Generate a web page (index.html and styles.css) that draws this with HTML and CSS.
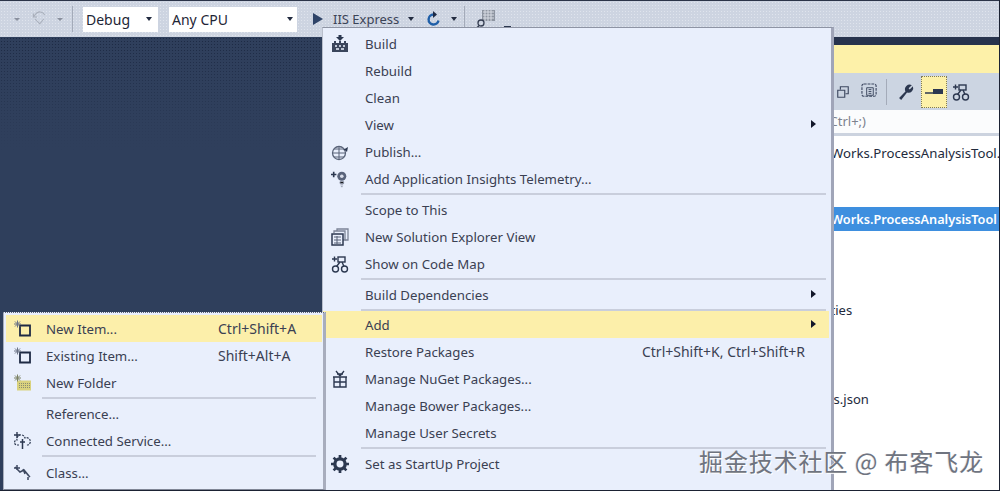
FILE: index.html
```html
<!DOCTYPE html>
<html lang="en">
<head>
<meta charset="utf-8">
<title>Add menu</title>
<link rel="stylesheet" href="styles.css">
</head>
<body>
<div class="app">
  <header class="toolbar">
    <span class="caret faint first"></span>
    <svg class="ic redo" viewBox="0 0 20 20"><path d="M17 5a6.500 6.500 0 0 0-11-1.500L3 7M3 3v4.500h4.500M5 10l6 6 5-6" fill="none" stroke="#a8aeba" stroke-width="1.300"/></svg>
    <span class="caret faint second"></span>
    <span class="tb-sep"></span>
    <div class="combo debug"><span>Debug</span><i class="caret"></i></div>
    <div class="combo cpu"><span>Any CPU</span><i class="caret"></i></div>
    <svg class="ic play" viewBox="0 0 10 12"><path d="M0 0l10 6-10 6z" fill="#2f4468"/></svg>
    <span class="iis">IIS Express</span>
    <i class="caret iis-caret"></i>
    <svg class="ic refresh" viewBox="0 0 16 16"><path d="M8.500 3.500a5 5 0 1 0 5 6" fill="none" stroke="#1f5fa8" stroke-width="2.400"/><path d="M8 0v7l4-3.500z" fill="#1e2a44"/></svg>
    <i class="caret refresh-caret"></i>
    <span class="tb-sep sep2"></span>
    <svg class="ic find" viewBox="0 0 20 20"><rect x="6" y="1" width="13" height="11" fill="#8d94a0"/><path d="M7 3h11M7 6h11M7 9h11M9 1v11M12 1v11M15 1v11" stroke="#d8dce4"/><circle cx="5" cy="14" r="3" fill="none" stroke="#333c50" stroke-width="1.300"/><path d="M3 16.500L1 19" stroke="#333c50" stroke-width="1.500"/></svg>
    <span class="dash"></span>
  </header>

  <div class="workspace">
    <main class="editor"></main>
    <aside class="panel">
      <div class="panel-dark"></div>
      <div class="panel-title"></div>
      <div class="panel-tools">
        <svg class="ic tool-a" viewBox="0 0 16 16"><path d="M5 5V2h9v8h-3M2 6h8v8H2z" fill="none" stroke="#3d4860" stroke-width="1.300"/></svg>
        <svg class="ic tool-b" viewBox="0 0 18 18"><rect x="1" y="1" width="15" height="13" rx="2" fill="none" stroke="#3d4860" stroke-width="1.200" stroke-dasharray="3 1"/><path d="M6 5h7v8H6z" fill="none" stroke="#3d4860"/><path d="M8 7h3M8 9h3M8 11h3" stroke="#3d4860"/></svg>
        <span class="tool-sep"></span>
        <svg class="ic tool-c" viewBox="0 0 16 16"><path d="M1 14l6-6a4.500 4.500 0 0 1 6-6l-3 3 1 1 3-3a4.500 4.500 0 0 1-5.500 6L3 16z" fill="#2c3850"/></svg>
        <span class="tool-on"><svg class="ic tool-d" viewBox="0 0 18 8"><path d="M0 5h9" stroke="#2c3850" stroke-width="1.500"/><rect x="8" y="1" width="10" height="5" fill="#2c3850"/></svg></span>
        <svg class="ic tool-e" viewBox="0 0 18 18"><use href="#codemap"/></svg>
      </div>
      <div class="search">Search (Ctrl+;)</div>
      <div class="tree">
        <div class="row r1"><span>Works.ProcessAnalysisTool.</span></div>
        <div class="row selected"><span>Works.ProcessAnalysisTool</span></div>
        <div class="row r3"><span>Properties</span></div>
        <div class="row r4"><span>appsettings.json</span></div>
      </div>
    </aside>
  </div>

  <svg class="defs" width="0" height="0" aria-hidden="true"><defs>
    <g id="codemap" fill="none" stroke="#2c3850" stroke-width="1.400"><circle cx="4.500" cy="14" r="3"/><circle cx="13.500" cy="14" r="3"/><rect x="7" y="2" width="7" height="5"/><path d="M9 7l-3.500 4.500M11 7l2 4.500"/><path d="M1 4h5M3.500 1.500v5"/></g>
    <g id="newitem"><path d="M6 5h10v10H6z" fill="none" stroke="#1e2a44" stroke-width="1.800"/><path d="M3.500 0v7M0 3.500h7M1 1l5 5M6 1L1 6" stroke="#6c7486" stroke-width="1"/></g>
  </defs></svg>

  <nav class="menu main-menu">
    <div class="item"><span class="gut"><svg class="ic" viewBox="0 0 18 18"><path d="M1 8h16v9H1z" fill="#3a455c"/><path d="M4 8V6M9 8V6M14 8V6" stroke="#3a455c" stroke-width="2"/><path d="M4 11h2M8 11h2M12 11h2" stroke="#e9effc" stroke-width="1.500"/><path d="M5 14h3M10 14h3" stroke="#e9effc" stroke-width="1.500"/><path d="M9 6L5 2h2.500V0h3v2H13z" fill="#2c3850"/></svg></span><span class="label">Build</span></div>
    <div class="item"><span class="gut"></span><span class="label">Rebuild</span></div>
    <div class="item"><span class="gut"></span><span class="label">Clean</span></div>
    <div class="item"><span class="gut"></span><span class="label">View</span><span class="sub"></span></div>
    <div class="item"><span class="gut"><svg class="ic" viewBox="0 0 18 18"><circle cx="8" cy="10" r="6.500" fill="none" stroke="#596378" stroke-width="1.300"/><path d="M1.500 10h13M8 3.500v13M3 6h10M3 14h10" stroke="#596378"/><path d="M12 7l5-3-1 5-1.500-1.500z" fill="#2c3850"/></svg></span><span class="label">Publish...</span></div>
    <div class="item"><span class="gut"><svg class="ic" viewBox="0 0 20 20"><circle cx="12" cy="7" r="5" fill="#59637a"/><circle cx="12" cy="7" r="2" fill="#d8dce8"/><path d="M10 13h4v2h-4zM10.500 16.500h3M11 18.500h2" stroke="#8b92a4"/><path d="M0 5h6M3 2v6" stroke="#2c3850" stroke-width="1.800"/></svg></span><span class="label">Add Application Insights Telemetry...</span></div>
    <div class="sep"></div>
    <div class="item"><span class="gut"></span><span class="label">Scope to This</span></div>
    <div class="item"><span class="gut"><svg class="ic" viewBox="0 0 18 18"><path d="M6 3V1h11v11h-3" fill="none" stroke="#7c8496" stroke-width="1.300"/><path d="M3 5V3h11v9h-2" fill="none" stroke="#7c8496" stroke-width="1.300"/><rect x="1" y="6" width="11" height="11" fill="none" stroke="#2c3850" stroke-width="1.500"/><path d="M3 9h7M3 12h7M3 15h7M6 8v8" stroke="#596378"/></svg></span><span class="label">New Solution Explorer View</span></div>
    <div class="item"><span class="gut"><svg class="ic" viewBox="0 0 18 18"><use href="#codemap"/></svg></span><span class="label">Show on Code Map</span></div>
    <div class="sep"></div>
    <div class="item"><span class="gut"></span><span class="label">Build Dependencies</span><span class="sub"></span></div>
    <div class="sep tight"></div>
    <div class="item hot"><span class="gut"></span><span class="label">Add</span><span class="sub"></span></div>
    <div class="item"><span class="gut"></span><span class="label">Restore Packages</span><span class="keys">Ctrl+Shift+K, Ctrl+Shift+R</span><span class="sub none"></span></div>
    <div class="item"><span class="gut"><svg class="ic" viewBox="0 0 16 18"><path d="M2 7h12v10H2zM1 7h14M2 12h12M8 7v10" fill="none" stroke="#2c3850" stroke-width="1.400"/><path d="M8 6L4 1M8 6l4-5M5 4h6" fill="none" stroke="#2c3850" stroke-width="1.300"/></svg></span><span class="label">Manage NuGet Packages...</span></div>
    <div class="item"><span class="gut"></span><span class="label">Manage Bower Packages...</span></div>
    <div class="item"><span class="gut"></span><span class="label">Manage User Secrets</span></div>
    <div class="sep"></div>
    <div class="item"><span class="gut"><svg class="ic" viewBox="0 0 16 16"><circle cx="8" cy="8" r="4.600" fill="none" stroke="#2c3850" stroke-width="3"/><path d="M8 0v3M8 13v3M0 8h3M13 8h3M2.300 2.300l2 2M11.700 11.700l2 2M13.700 2.300l-2 2M4.300 11.700l-2 2" stroke="#2c3850" stroke-width="2.400"/></svg></span><span class="label">Set as StartUp Project</span></div>
  </nav>

  <nav class="menu add-menu">
    <div class="item hot"><span class="gut"><svg class="ic" viewBox="0 0 17 16"><use href="#newitem"/></svg></span><span class="label">New Item...</span><span class="keys">Ctrl+Shift+A</span></div>
    <div class="item"><span class="gut"><svg class="ic" viewBox="0 0 17 16"><use href="#newitem"/></svg></span><span class="label">Existing Item...</span><span class="keys">Shift+Alt+A</span></div>
    <div class="item"><span class="gut"><svg class="ic" viewBox="0 0 17 16"><path d="M3 6h14v10H3z" fill="#d9d27e"/><path d="M5 9h11M5 11h11M5 13h11" stroke="#8a8d72" stroke-dasharray="1 1"/><path d="M3.500 0v7M0 3.500h7M1 1l5 5M6 1L1 6" stroke="#7c8264"/></svg></span><span class="label">New Folder</span></div>
    <div class="sep"></div>
    <div class="item"><span class="gut"></span><span class="label">Reference...</span></div>
    <div class="item"><span class="gut"><svg class="ic" viewBox="0 0 17 17"><path d="M5 13H3a2.500 2.500 0 0 1 0-5 4 4 0 0 1 8-2 3.500 3.500 0 0 1 3 7h-2" fill="none" stroke="#2c3850" stroke-width="1.200" stroke-dasharray="2 1"/><path d="M8.500 7v10M6 10h5" stroke="#2c3850" stroke-width="1.500"/><path d="M3 0v6M0 3h6" stroke="#2c3850" stroke-width="1.400"/></svg></span><span class="label">Connected Service...</span></div>
    <div class="sep wide"></div>
    <div class="item"><span class="gut"><svg class="ic" viewBox="0 0 17 15"><path d="M1 2l5 5 4-2 5 6M3 0v5M0 3h6M9 4l2 5M13 9l3 3M14 12v3" fill="none" stroke="#3d4860" stroke-width="1.500"/></svg></span><span class="label">Class...</span></div>
  </nav>

  <div class="watermark">掘金技术社区 @ 布客飞龙</div>
</div>
</body>
</html>
```
FILE: styles.css
```css
* { box-sizing: border-box; }
html, body { margin: 0; height: 100%; }
body { overflow: hidden; background: #2f3f5c; font-family: "Noto Sans", "Open Sans", sans-serif; font-size: 14px; color: #33394a; }
.app { position: relative; width: 1000px; height: 491px; overflow: hidden; display: flex; flex-direction: column; border-right: 1px solid #1b2233; border-bottom: 1px solid #1b2233; }

.toolbar { flex: 0 0 37px; display: flex; align-items: center; border-top: 1px solid #2b3448; background-color: #cdd4e1; background-image: radial-gradient(circle, #dfe4ed 0.7px, transparent 1px); background-size: 3px 3px; }
.ic { display: block; flex: none; }
.caret { display: inline-block; flex: none; width: 0; height: 0; border-left: 3.500px solid transparent; border-right: 3.500px solid transparent; border-top: 4px solid #222b40; }
.caret.faint { border-top-color: #8a909e; border-left-width: 3px; border-right-width: 3px; border-top-width: 3px; }
.first { margin-left: 14px; }
.redo { width: 16px; height: 16px; margin-left: 11px; }
.second { margin-left: 10px; }
.tb-sep { flex: none; width: 1px; height: 26px; margin-left: 9px; background: #a4abb9; }
.combo { flex: none; height: 25px; background: #fff; display: flex; align-items: center; justify-content: space-between; color: #1e2536; font-size: 14px; }
.debug { width: 75px; margin-left: 10px; padding: 0 6px 0 3px; }
.cpu { width: 128px; margin-left: 11px; padding: 0 4px 0 3px; }
.play { width: 10px; height: 12px; margin-left: 16px; }
.iis { margin-left: 10px; font-size: 13px; color: #3b4356; white-space: nowrap; width: 66px; }
.iis-caret { margin-left: 9px; }
.refresh { width: 16px; height: 16px; margin-left: 11px; }
.refresh-caret { margin-left: 10px; }
.sep2 { margin-left: 7px; }
.find { width: 20px; height: 20px; margin-left: 11px; }
.dash { flex: none; width: 7px; height: 2px; margin: 16px 0 0 8px; background: #2c3850; }

.workspace { flex: 1; min-height: 0; display: flex; }
.editor { flex: 1; min-width: 0; background-color: #2f3f5c; background-image: linear-gradient(to bottom, rgba(47,63,92,0), rgba(47,63,92,1) 115px), radial-gradient(circle, #1d2a44 0.7px, transparent 1px); background-size: 100% 100%, 3px 3px; }
.panel { flex: 0 0 240px; display: flex; flex-direction: column; background: #fff; overflow: hidden; }
.panel-dark { flex: 0 0 8px; background: #27334d; }
.panel-title { flex: 0 0 28px; background: #fdf1a9; }
.panel-tools { flex: 0 0 37px; display: flex; align-items: center; padding-left: 77px; background: #ccd5e2; }
.tool-a { width: 14px; height: 14px; }
.tool-b { width: 17px; height: 17px; margin-left: 11px; }
.tool-sep { flex: none; width: 1px; height: 26px; margin-left: 8px; background: #a4abb9; }
.tool-c { width: 17px; height: 17px; margin-left: 11px; }
.tool-on { flex: none; width: 26px; height: 32px; margin-left: 6px; display: flex; align-items: center; justify-content: center; background: #fdf1a9; outline: 1px dotted #7e7a5a; outline-offset: -1px; }
.tool-d { width: 18px; height: 8px; }
.tool-e { width: 18px; height: 18px; margin-left: 5px; }
.search { flex: 0 0 23px; line-height: 23px; background: #fbfcfd; color: #7d828e; text-align: right; padding-right: 133px; white-space: nowrap; font-size: 13px; }
.tree { flex: 1; border-top: 3px solid #ccd3df; display: flex; flex-direction: column; color: #222a3c; font-size: 13.200px; }
.row { height: 24px; line-height: 24px; white-space: nowrap; }
.row span { display: block; }
.r1 { margin-top: 5px; padding-left: 72px; }
.selected { margin-top: 42px; padding-left: 72px; background: #3e8fdf; color: #fff; font-weight: 600; font-size: 12.700px; }
.r3 { margin-top: 67px; padding-left: 30px; font-size: 13px; }
.r4 { margin-top: 65px; padding-left: 9px; font-size: 13px; }

.menu { position: absolute; background-color: #e9effc; display: flex; flex-direction: column; }
.main-menu { left: 322px; top: 27px; width: 512px; height: 464px; padding: 2px 2px 0 0; border-top: 1px solid #8e94a4; border-left: 1px solid #b9bfcc; border-right: 3px solid #a0a5b8; }
.add-menu { left: 3px; top: 312px; width: 323px; height: 178px; padding: 2px 1px 0 2px; border-top: 1px dotted #5d6474; border-left: 1px solid #a8aebc; border-right: 3px solid #a8adbd; border-bottom: 1px solid #808696; }
.item { flex: 0 0 27px; display: flex; align-items: center; white-space: nowrap; }
.gut { flex: none; width: 42px; display: flex; justify-content: center; padding-right: 8px; }
.gut .ic { width: 18px; height: 18px; }
.label { flex: 1; color: #3a4052; font-size: 13.250px; }
.keys { flex: none; color: #3a4052; }
.sub { flex: none; width: 27px; height: 9px; position: relative; }
.sub::before { content: ""; position: absolute; left: 9px; top: 0; border-top: 4.500px solid transparent; border-bottom: 4.500px solid transparent; border-left: 5px solid #12172a; }
.sub.none { width: 24px; }
.sub.none::before { display: none; }
.hot { background: #fcefaa; }
.sep { flex: 0 0 4px; margin: 0 3px 0 38px; position: relative; }
.sep.tight { flex-basis: 3px; }
.sep.wide { flex-basis: 5px; }
.sep::before { content: ""; position: absolute; left: 0; right: 0; top: 1px; height: 2px; background: #c9cedc; }
.add-menu .gut { width: 40px; padding-right: 8px; }
.add-menu .gut .ic { width: 17px; height: 17px; }
.add-menu .keys { width: 104px; }
.add-menu .sep { margin-left: 36px; margin-right: 6px; }

.defs { position: absolute; }
.watermark { position: absolute; left: 699px; top: 446px; font-family: "Noto Sans CJK SC", sans-serif; font-size: 24px; line-height: 30px; color: #6f7480; white-space: nowrap; text-shadow: 1px 1px 0 #fff, -1px 0 0 #e8eaf0; letter-spacing: 0.900px; }
```
